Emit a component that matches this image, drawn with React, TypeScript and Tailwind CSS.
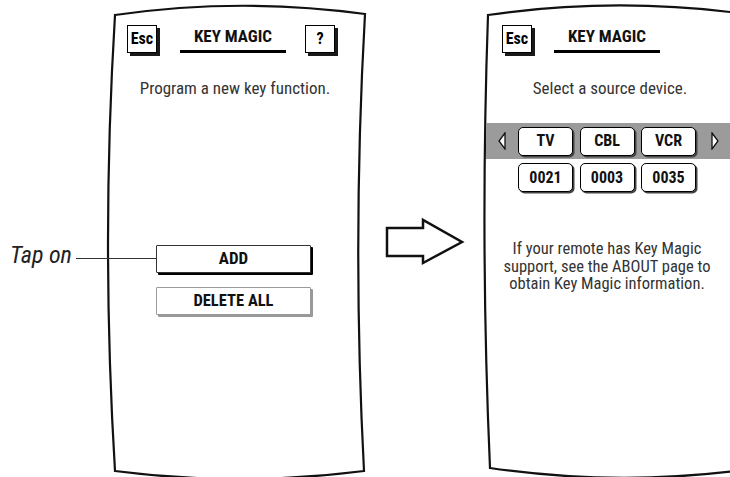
import type { ReactNode } from 'react';

const LEFT_OUTLINE =
  'M15,15 Q140,-3 265,14 Q252,243 264,471 Q139,487 15,471 Q1,243 15,15 Z';
const RIGHT_OUTLINE =
  'M15,15 Q140,-3 265,13 Q257,243 263,471 Q140,486 17,468 Q7,243 15,15 Z';

function Device({ outline, children }: { outline: string; children: ReactNode }) {
  return (
    <div className="relative h-[477px] w-[270px] shrink-0">
      <svg
        className="absolute left-0 top-0 h-[477px] w-[270px] overflow-visible"
        viewBox="0 0 270 477"
      >
        <path d={outline} fill="white" stroke="#111" strokeWidth="2.2" />
      </svg>
      <div className="relative">{children}</div>
    </div>
  );
}

function KeyBox({ label, hidden }: { label: string; hidden?: boolean }) {
  return (
    <div
      className={
        hidden
          ? 'invisible h-[28px] w-[30px]'
          : 'flex h-[28px] w-[30px] items-center justify-center border-[1.5px] border-black bg-white text-[16px] font-bold text-black shadow-[3px_3px_0_#1a1a1a]'
      }
    >
      {label}
    </div>
  );
}

function Title() {
  return (
    <div className="w-[106px]">
      <p className="mt-[3px] text-center text-[17px] font-bold leading-[17px] text-[#111]">
        KEY MAGIC
      </p>
      <div className="mt-[5px] h-[2.5px] bg-black" />
    </div>
  );
}

function Triangle({ dir }: { dir: 'left' | 'right' }) {
  return (
    <svg width="8" height="18" viewBox="0 0 8 18">
      <polygon
        points={dir === 'left' ? '7,1 1,9 7,17' : '1,1 7,9 1,17'}
        fill="white"
        stroke="#111"
        strokeWidth="1.3"
      />
    </svg>
  );
}

function Chip({ label }: { label: string }) {
  return (
    <div className="flex h-[29px] w-[55px] items-center justify-center rounded-[5px] border-[1.5px] border-black bg-white text-[16px] font-bold text-[#111] shadow-[1.5px_1.5px_0_#444]">
      {label}
    </div>
  );
}

export default function App() {
  return (
    <div className="relative flex h-[477px] w-[730px] overflow-hidden bg-white pl-[100px] font-['Roboto_Condensed','DejaVu_Sans_Condensed','Liberation_Sans',sans-serif]">
      <Device outline={LEFT_OUTLINE}>
        <div className="flex items-start pl-[27px] pt-[25px]">
          <KeyBox label="Esc" />
          <div className="ml-[23px]">
            <Title />
          </div>
          <div className="ml-[19px]">
            <KeyBox label="?" />
          </div>
        </div>
        <p className="mt-[26px] whitespace-nowrap text-center text-[17px] leading-[18px] text-[#333]">
          Program a new key function.
        </p>
        <div className="ml-[56px] mt-[148px] flex w-[155px] flex-col gap-[14px]">
          <div className="flex h-[28px] items-center justify-center rounded-[1px] border border-[#333] bg-white text-[17px] font-bold text-[#111] shadow-[2px_2px_0_#000]">
            ADD
          </div>
          <div className="flex h-[28px] items-center justify-center rounded-[1px] border border-[#9a9a9a] bg-white text-[16.5px] font-bold text-[#111] shadow-[2px_2px_0_#999]">
            DELETE ALL
          </div>
        </div>
      </Device>

      <div className="w-[103px] shrink-0">
        <svg className="ml-[15px] mt-[217px]" width="80" height="49" viewBox="0 0 80 49">
          <polygon
            points="2,11 38,11 38,3 77,25 38,46 38,39 2,39"
            fill="white"
            stroke="#111"
            strokeWidth="2.5"
            strokeLinejoin="miter"
          />
        </svg>
      </div>

      <Device outline={RIGHT_OUTLINE}>
        <div className="flex items-start pl-[29px] pt-[25px]">
          <KeyBox label="Esc" />
          <div className="ml-[22px]">
            <Title />
          </div>
          <div className="ml-[19px]">
            <KeyBox label="" hidden />
          </div>
        </div>
        <p className="ml-[4px] mt-[26px] whitespace-nowrap text-center text-[17px] leading-[18px] text-[#333]">
          Select a source device.
        </p>
        <div className="ml-[13px] mt-[26px] flex h-[36px] w-[300px] items-center bg-[#9b9b9b] pl-[12px]">
          <Triangle dir="left" />
          <div className="ml-[12px] flex gap-[6.5px]">
            <Chip label="TV" />
            <Chip label="CBL" />
            <Chip label="VCR" />
          </div>
          <div className="ml-[15px]">
            <Triangle dir="right" />
          </div>
        </div>
        <div className="ml-[45px] mt-[4px] flex gap-[6.5px]">
          <Chip label="0021" />
          <Chip label="0003" />
          <Chip label="0035" />
        </div>
        <p className="ml-[14px] mt-[48px] w-[240px] whitespace-nowrap text-center text-[16.5px] leading-[17.5px] text-[#333]">
          If your remote has Key Magic
          <br />
          support, see the ABOUT page to
          <br />
          obtain Key Magic information.
        </p>
      </Device>

      <p className="absolute left-[10px] top-[243px] text-[24px] italic leading-[24px] text-[#222]">
        Tap on
      </p>
      <div className="absolute left-[76px] top-[258px] h-px w-[80px] bg-[#333]" />
    </div>
  );
}
